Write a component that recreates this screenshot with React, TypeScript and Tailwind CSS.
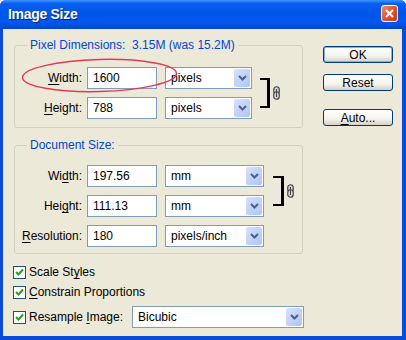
import React from "react";

const U = ({ children }: { children: React.ReactNode }) => (
  <span className="underline underline-offset-[2px]">{children}</span>
);

function Chevron() {
  return (
    <svg width="9" height="6" viewBox="0 0 9 6">
      <path d="M1 1 L4.5 4.5 L8 1" fill="none" stroke="#4d6185" strokeWidth="2" />
    </svg>
  );
}

function Select({ value, w }: { value: string; w: string }) {
  return (
    <div className={`${w} h-[22px] bg-white border border-[#7f9db9] flex items-stretch`}>
      <div className="flex-1 pl-[5px] flex items-center text-black">{value}</div>
      <div className="w-[16px] m-px rounded-[2px] bg-[linear-gradient(135deg,#d6e2fe_0%,#c3d3fb_45%,#b0c4f6_100%)] flex items-center justify-center">
        <Chevron />
      </div>
    </div>
  );
}

function Input({ value }: { value: string }) {
  return (
    <div className="w-[70px] h-[22px] bg-white border border-[#7f9db9] pl-[5px] flex items-center text-black">
      {value}
    </div>
  );
}

function Row({ label, value, unit, sw }: { label: React.ReactNode; value: string; unit: string; sw: string }) {
  return (
    <div className="flex items-center h-[22px]">
      <div className="w-[67px] text-right pr-0">{label}</div>
      <div className="ml-[5px]">
        <Input value={value} />
      </div>
      <div className="ml-[8px]">
        <Select value={unit} w={sw} />
      </div>
    </div>
  );
}

function Chain() {
  return (
    <svg width="7" height="14" viewBox="0 0 7 14">
      <rect x="0.75" y="0.75" width="5.5" height="7.5" rx="2.75" fill="#d4d4d4" stroke="#444" strokeWidth="1.2" />
      <rect x="0.75" y="5.75" width="5.5" height="7.5" rx="2.75" fill="#d4d4d4" stroke="#444" strokeWidth="1.2" />
      <line x1="3.5" y1="3" x2="3.5" y2="11" stroke="#444" strokeWidth="1" />
    </svg>
  );
}

function Check() {
  return (
    <div className="w-[13px] h-[13px] bg-white border border-[#1c5180] flex items-center justify-center">
      <svg width="9" height="9" viewBox="0 0 9 9">
        <path d="M1 4 L3.5 6.5 L8 1.5" fill="none" stroke="#21a121" strokeWidth="2" />
      </svg>
    </div>
  );
}

function Btn({ children, def }: { children: React.ReactNode; def?: boolean }) {
  return (
    <div
      className={`w-[70px] h-[17px] rounded-[3px] border border-[#003c74] bg-[linear-gradient(to_bottom,#ffffff_0%,#f4f3ee_60%,#d6d0c5_100%)] flex items-center justify-center text-black ${
        def ? "shadow-[inset_0_0_0_1px_#89ade4]" : ""
      }`}
    >
      {children}
    </div>
  );
}

export default function App() {
  return (
    <div
      className="relative w-[406px] h-[340px] flex flex-col bg-[#0a4bda] overflow-hidden rounded-t-[6px]"
      style={{ fontFamily: '"Liberation Sans", Arial, sans-serif' }}
    >
      <div className="h-[29px] flex items-center justify-between pl-[8px] pr-[8px] bg-[linear-gradient(to_bottom,#3c95ff_0%,#0a5ff0_12%,#0055ea_45%,#0058ee_75%,#0046d0_100%)]">
        <span className="text-white font-bold text-[14px] tracking-[-0.3px] [text-shadow:1px_1px_0_#0a1e6e]">Image Size</span>
        <div className="w-[17px] h-[17px] mt-[-2px] rounded-[3px] border border-white bg-[linear-gradient(135deg,#f0896a_0%,#e0552f_50%,#c63a16_100%)] flex items-center justify-center">
          <svg width="9" height="9" viewBox="0 0 9 9">
            <path d="M1 1 L8 8 M8 1 L1 8" stroke="white" strokeWidth="2" />
          </svg>
        </div>
      </div>
      <div className="flex-1 flex ml-[3px] mr-[4px] mb-[4px] bg-[#ece9d8] text-[12px] leading-[14px] text-black">
        <div className="pl-[11px] pt-[9px] flex flex-col">
          <fieldset className="w-[289px] border border-[#d0d0bf] rounded-[3px] pt-[15px] pb-[8px]">
            <legend className="ml-[12px] px-[3px] text-[#0046d5]">Pixel Dimensions:&nbsp; 3.15M (was 15.2M)</legend>
            <div className="flex items-center">
              <div className="flex flex-col gap-[8px]">
                <Row label={<><U>W</U>idth:</>} value="1600" unit="pixels" sw="w-[87px]" />
                <Row label={<><U>H</U>eight:</>} value="788" unit="pixels" sw="w-[87px]" />
              </div>
              <div className="ml-[8px] w-[10px] h-[30px] border-t-2 border-b-2 border-r-[3px] border-black" />
              <div className="ml-[3px] flex">
                <Chain />
              </div>
            </div>
          </fieldset>
          <fieldset className="mt-[10px] w-[289px] border border-[#d0d0bf] rounded-[3px] pt-[13px] pb-[6px]">
            <legend className="ml-[12px] px-[3px] text-[#0046d5]">Document Size:</legend>
            <div className="flex flex-col gap-[8px]">
              <div className="flex items-center">
                <div className="flex flex-col gap-[8px]">
                  <Row label={<>Wi<U>d</U>th:</>} value="197.56" unit="mm" sw="w-[99px]" />
                  <Row label={<>Hei<U>g</U>ht:</>} value="111.13" unit="mm" sw="w-[99px]" />
                </div>
                <div className="ml-[9px] w-[11px] h-[30px] border-t-2 border-b-2 border-r-[3px] border-black" />
                <div className="ml-[3px] flex">
                  <Chain />
                </div>
              </div>
              <Row label={<><U>R</U>esolution:</>} value="180" unit="pixels/inch" sw="w-[99px]" />
            </div>
          </fieldset>
          <div className="mt-[11px] -ml-px flex flex-col">
            <div className="h-[14px] flex items-center gap-[3px]">
              <Check />
              <span>Scale St<U>y</U>les</span>
            </div>
            <div className="mt-[6px] h-[14px] flex items-center gap-[3px]">
              <Check />
              <span><U>C</U>onstrain Proportions</span>
            </div>
            <div className="mt-[7px] h-[22px] flex items-center">
              <Check />
              <span className="ml-[3px] w-[103px]">Resample <U>I</U>mage:</span>
              <Select value="Bicubic" w="w-[172px]" />
            </div>
          </div>
        </div>
        <div className="ml-[19px] pt-[17px] flex flex-col">
          <Btn def>OK</Btn>
          <div className="mt-[11px]">
            <Btn>Reset</Btn>
          </div>
          <div className="mt-[18px]">
            <Btn><U>A</U>uto...</Btn>
          </div>
        </div>
      </div>
      <svg className="absolute left-0 top-0 pointer-events-none" width="406" height="340">
        <ellipse cx="99.5" cy="75.5" rx="77" ry="16" fill="none" stroke="#e23a56" strokeWidth="1.5" transform="rotate(-1.5 99.5 75.5)" />
      </svg>
    </div>
  );
}
